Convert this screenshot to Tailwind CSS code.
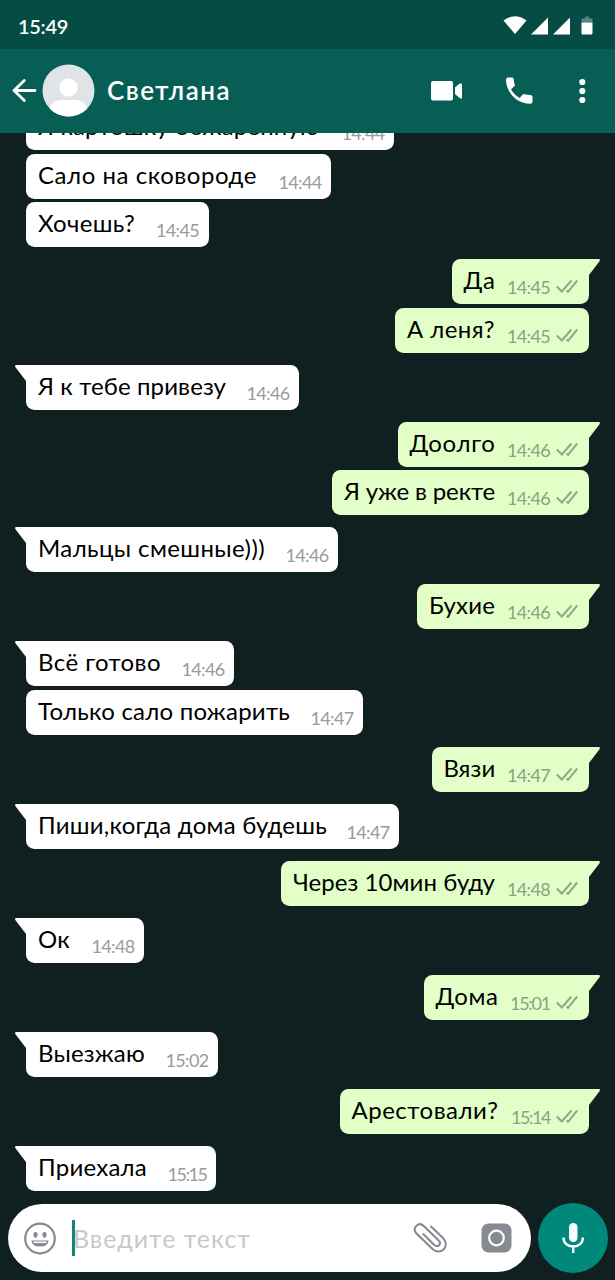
<!DOCTYPE html>
<html lang="ru">
<head>
    <meta charset="UTF-8" />
    <meta name="viewport" content="width=device-width, initial-scale=1.0"/>
    <title>Светлана</title>
    <script src="https://cdn.jsdelivr.net/npm/@tailwindcss/browser@4"></script>
</head>
<body class="bg-[#102020] font-['Lato','Noto_Sans',sans-serif]">
    <div class="w-[615px] h-[1280px] flex flex-col overflow-hidden">
        <!-- Status bar -->
        <div class="h-[49px] shrink-0 bg-[#054d44] flex items-center justify-between pl-[18px] pr-[22px] pt-[2px] text-white">
            <span data-fit="50" class="text-[20px] font-semibold whitespace-nowrap">15:49</span>
            <svg class="w-[90px] h-[20px]" viewBox="503 15.500 90 20" fill="#fff">
                <path d="M503.500 20Q515 11.500 526.500 20L515 33.500Z"/>
                <path d="M548 17v17h-17zM570 17v17h-17z"/>
                <path d="M581.500 22v-4h3.500v-2h4v2h3.500v4z" fill="#55877f"/>
                <path d="M581.500 22h11v10.500q0 1.500-1.500 1.500h-8q-1.500 0-1.500-1.500z"/>
            </svg>
        </div>

        <!-- Header -->
        <div class="relative z-10 h-[84px] shrink-0 bg-[#075e54] flex items-center pl-[11px] text-white">
            <svg class="w-[27px] h-[26px]" viewBox="0 0 27 26" fill="none" stroke="#fff" stroke-width="2.8" stroke-linecap="round" stroke-linejoin="round">
                <path d="M24 12.500H3M13.300 2.500L3 12.500l10.300 10"/>
            </svg>
            <svg class="w-[53px] h-[53px] ml-1 mb-[2px]" viewBox="0 0 53 53">
                <defs><clipPath id="face"><circle cx="26.500" cy="26.500" r="26"/></clipPath></defs>
                <circle cx="26.500" cy="26.500" r="26" fill="#dfe5e7"/>
                <g fill="#fff" clip-path="url(#face)">
                    <circle cx="26.500" cy="23.500" r="9.200"/>
                    <path d="M8 46q0-10 13-10h11q13 0 13 10v8H8z"/>
                </g>
            </svg>
            <span data-fit="124" class="ml-3 mb-[2px] text-[26px] font-semibold whitespace-nowrap">Светлана</span>
            <svg class="absolute left-[431px] top-[28px] w-[155px] h-[30px]" viewBox="431 77 155 30" fill="#fff">
                <rect x="431" y="81" width="22" height="19.500" rx="2"/>
                <path d="M455 87.500l4-3.500q3-2 3 1v12q0 3-3 .500l-4-3.500z"/>
                <path d="M507.500 77.500h4.500q1.500 0 1.700 1.500c.1 2 .4 3.500 1 5.300q.3 1.200-.5 2l-3.200 3q3 5.500 8.600 8.600l3-3.200q.8-.8 2-.5c1.800.5 3.300.8 5.300.9q2.600.3 2.600 1.700v5q0 2-2.500 2c-13.500-.5-23.500-11-24-23.800q0-2.500 1.500-2.500z"/>
                <circle cx="582.300" cy="82" r="3.100"/><circle cx="582.300" cy="91" r="3.100"/><circle cx="582.300" cy="100" r="3.100"/>
            </svg>
        </div>

        <!-- Messages -->
        <div id="chat" class="h-[1058px] shrink-0 flex flex-col justify-end pl-[26px] pr-[26px]"></div>

        <!-- Input -->
        <div class="flex items-center pl-2 pt-[12px] gap-[7px]">
            <div class="w-[523px] h-[68px] rounded-full bg-white flex items-center pl-4">
                <svg class="w-[33px] h-[33px]" viewBox="0 0 33 33" fill="none">
                    <circle cx="16" cy="16.500" r="14.800" stroke="#868a91" stroke-width="2.200"/>
                    <ellipse cx="11.500" cy="12.800" rx="2.100" ry="2.900" fill="#868a91"/>
                    <ellipse cx="20.500" cy="12.800" rx="2.100" ry="2.900" fill="#868a91"/>
                    <path d="M7.500 18.500h17q0 6-8.500 6t-8.500-6z" fill="#868a91"/>
                    <path d="M9.500 19.500h13v1.500h-13z" fill="#fff"/>
                </svg>
                <div class="w-[3px] h-[36px] bg-[#0b8a7a] ml-[15px]"></div>
                <span data-fit="178" class="-ml-[2px] mt-[2px] text-[25px] text-[#c8c9ca] whitespace-nowrap">Введите текст</span>
                <svg class="w-[34px] h-[32px] ml-auto" viewBox="413 1222 34 32" fill="none" stroke="#868a91" stroke-width="2.100" stroke-linecap="round">
                    <path d="M431 1226.500l12 11.500c4 4.500 3 9 .500 11.500s-7 3-11-.500l-16-15.500c-3-3-2-6 0-7.800s5-2 7.500.500l14.500 14c2 2 1.500 4 .5 5s-3 1.200-5-.5l-10.500-10.500"/>
                </svg>
                <svg class="w-[31px] h-[30px] ml-[34px] mr-[19px]" viewBox="0 0 31 30">
                    <rect x=".5" y=".5" width="30" height="29" rx="7" fill="#868a91"/>
                    <circle cx="15.500" cy="15" r="7.300" fill="none" stroke="#fff" stroke-width="2.200"/>
                </svg>
            </div>
            <div class="w-[70px] h-[70px] rounded-full bg-[#00897b] flex items-center justify-center">
                <svg class="w-[24px] h-[32px]" viewBox="0 0 24 32" fill="none">
                    <rect x="8" y="1" width="8.500" height="19" rx="4.200" fill="#fff"/>
                    <path d="M2.500 15.500c0 5.500 4 9 9.700 9s9.700-3.500 9.700-9M12.200 24.500v6.500" stroke="#fff" stroke-width="2.400"/>
                </svg>
            </div>
        </div>
    </div>

    <script>
        // text, time, bubble width, text width, time width, outgoing, first in group
        const messages = [
            ["Я картошку обжаренную", "14:44", 368, 281, 43, false, false],
            ["Сало на сковороде", "14:44", 305, 219, 43, false, false],
            ["Хочешь?", "14:45", 182.5, 97, 43, false, false],
            ["Да", "14:45", 137.5, 32, 43, true, true],
            ["А леня?", "14:45", 194, 88, 43, true, false],
            ["Я к тебе привезу", "14:46", 273, 188, 43, false, true],
            ["Доолго", "14:46", 191.5, 86, 43, true, true],
            ["Я уже в ректе", "14:46", 257, 151, 43, true, false],
            ["Мальцы смешные)))", "14:46", 312, 227, 43, false, true],
            ["Бухие", "14:46", 172, 66, 43, true, true],
            ["Всё готово", "14:46", 208, 123, 43, false, true],
            ["Только сало пожарить", "14:47", 337, 252, 43, false, false],
            ["Вязи", "14:47", 157.5, 52, 43, true, true],
            ["Пиши,когда дома будешь", "14:47", 373, 289, 43, false, true],
            ["Через 10мин буду", "14:48", 308, 202, 43, true, true],
            ["Ок", "14:48", 118, 32, 43, false, true],
            ["Дома", "15:01", 165.5, 63, 40, true, true],
            ["Выезжаю", "15:02", 192, 107, 43, false, true],
            ["Арестовали?", "15:14", 249.5, 147, 39, true, true],
            ["Приехала", "15:15", 190, 109, 39, false, true],
        ];

        const ticks = `<svg class="w-[22px] h-[15px] ml-[6px] mb-[10px]" viewBox="0 0 22 15" fill="none" stroke="#8fa886" stroke-width="2">
            <path d="M.8 7.500l5 5L15.500 1.500M10.500 11.500l1.500 1.300L21.200 1.500"/></svg>`;
        const tailLeft = `<svg class="absolute left-[-11px] top-0 w-[20px] h-[18px]" viewBox="0 0 20 18" fill="#fff">
            <path d="M1 0H20V18H11V16L.3 2Q-.3 0 1 0z"/></svg>`;
        const tailRight = `<svg class="absolute right-[-11px] top-0 w-[20px] h-[18px]" viewBox="0 0 20 18" fill="#e1ffc7">
            <path d="M19 0H0V18H9V16L19.700 2Q20.300 0 19 0z"/></svg>`;

        document.getElementById("chat").innerHTML = messages.map(([text, time, width, fit, timeFit, out, first]) => `
            <div class="relative h-[45px] shrink-0 rounded-[8.5px] pl-3 flex items-end justify-between ${out ? "self-end bg-[#e1ffc7] pr-[11px]" : "self-start bg-white pr-[9.5px]"} ${first ? "mt-3" : "mt-[3.6px]"}" style="width:${width}px">
                ${first ? (out ? tailRight : tailLeft) : ""}
                <span data-fit="${fit}" class="relative text-[24px] leading-[30px] mb-[9px] text-black whitespace-nowrap">${text}</span>
                <span class="relative flex items-end">
                    <span data-fit="${timeFit}" class="text-[18px] leading-[22px] mb-[6px] whitespace-nowrap ${out ? "text-[#8ca284]" : "text-[#999b9c]"}">${time}</span>
                    ${out ? ticks : ""}
                </span>
            </div>
        `).join("");

        // Spread the letters so that each line fills its width
        function fitText() {
            document.querySelectorAll("[data-fit]").forEach(el => {
                el.style.letterSpacing = "0px";
                const range = document.createRange();
                range.selectNodeContents(el);
                const gap = (Number(el.dataset.fit) - range.getBoundingClientRect().width) / el.textContent.length;
                el.style.letterSpacing = gap + "px";
            });
        }

        fitText();
        window.addEventListener("load", fitText);
        new ResizeObserver(fitText).observe(document.querySelector("[data-fit]"));
    </script>
</body>
</html>
